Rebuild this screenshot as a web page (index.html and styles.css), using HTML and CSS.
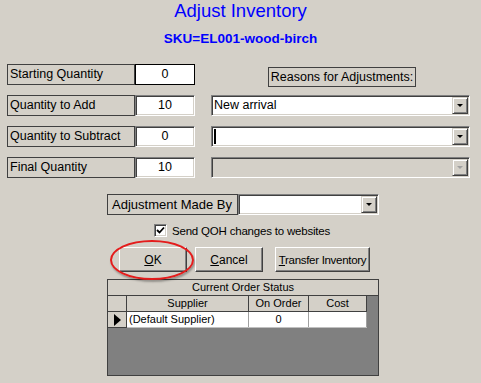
FILE: index.html
```html
<!DOCTYPE html>
<html lang="en">
<head>
    <meta charset="UTF-8">
    <title>Adjust Inventory</title>
    <link rel="stylesheet" href="styles.css">
</head>
<body>
    <div class="window">
        <h1 class="title">Adjust Inventory</h1>
        <h2 class="sku">SKU=EL001-wood-birch</h2>

        <div class="fields">
            <div class="qty-col">
                <div class="qty-row">
                    <div class="label-box">Starting Quantity</div>
                    <div class="value-box flat">0</div>
                </div>
                <div class="qty-row">
                    <div class="label-box">Quantity to Add</div>
                    <div class="value-box">10</div>
                </div>
                <div class="qty-row">
                    <div class="label-box">Quantity to Subtract</div>
                    <div class="value-box">0</div>
                </div>
                <div class="qty-row">
                    <div class="label-box">Final Quantity</div>
                    <div class="value-box">10</div>
                </div>
            </div>
            <div class="reason-col">
                <div class="reason-title">Reasons for Adjustments:</div>
                <div class="combo">
                    <span class="combo-text">New arrival</span>
                    <span class="combo-btn"><span class="arrow"></span></span>
                </div>
                <div class="combo">
                    <span class="combo-text"><span class="caret"></span></span>
                    <span class="combo-btn"><span class="arrow"></span></span>
                </div>
                <div class="combo disabled">
                    <span class="combo-text"></span>
                    <span class="combo-btn"><span class="arrow"></span></span>
                </div>
            </div>
        </div>

        <div class="made-by">
            <div class="label-box made-label">Adjustment Made By</div>
            <div class="combo made-combo">
                <span class="combo-text"></span>
                <span class="combo-btn"><span class="arrow"></span></span>
            </div>
        </div>

        <div class="check-row">
            <span class="checkbox">
                <svg width="9" height="9" viewBox="0 0 9 9"><polyline points="1,4 3.5,6.5 8,1.5" fill="none" stroke="#000" stroke-width="1.8"/></svg>
            </span>
            <span>Send QOH changes to websites</span>
        </div>

        <div class="buttons">
            <button class="btn btn-ok"><u>O</u>K</button>
            <button class="btn btn-cancel"><u>C</u>ancel</button>
            <button class="btn btn-transfer"><u>T</u>ransfer Inventory</button>
            <span class="highlight"></span>
        </div>

        <div class="grid">
            <div class="grid-caption">Current Order Status</div>
            <table class="grid-table">
                <tr class="grid-head">
                    <th class="sel"></th>
                    <th class="col-supplier">Supplier</th>
                    <th class="col-order">On Order</th>
                    <th class="col-cost">Cost</th>
                </tr>
                <tr class="grid-row">
                    <td class="sel"><span class="row-arrow"></span></td>
                    <td class="left">(Default Supplier)</td>
                    <td>0</td>
                    <td></td>
                </tr>
            </table>
        </div>
    </div>
</body>
</html>
```

FILE: styles.css
```css
body {
    margin: 0;
    padding: 0;
    background-color: #d4d0c8;
    font-family: "Liberation Sans", Arial, sans-serif;
    font-size: 12.5px;
    color: #000;
}

.window {
    width: 481px;
    height: 383px;
    overflow: hidden;
}

.title {
    margin: 0;
    font-size: 18.5px;
    font-weight: normal;
    line-height: 22px;
    color: #0000ff;
    text-align: center;
}

.sku {
    margin: 9px 0 0;
    font-size: 13.5px;
    line-height: 16px;
    color: #0000ff;
    text-align: center;
}

/* quantities + reasons */
.fields {
    display: flex;
    margin-top: 17px;
}

.qty-col {
    display: flex;
    flex-direction: column;
    gap: 10px;
    margin-left: 7px;
}

.qty-row {
    display: flex;
    height: 21px;
}

.label-box {
    box-sizing: border-box;
    width: 128px;
    height: 21px;
    border: 1px solid #404040;
    padding-left: 2px;
    line-height: 19px;
    white-space: nowrap;
}

.value-box {
    box-sizing: border-box;
    width: 60px;
    height: 21px;
    background-color: #fff;
    text-align: center;
    line-height: 19px;
    border: 1px solid;
    border-color: #808080 #fff #fff #808080;
    box-shadow: inset 1px 1px #404040, inset -1px -1px #d4d0c8;
}

.value-box.flat {
    border: 1px solid #000;
    box-shadow: none;
}

.reason-col {
    display: flex;
    flex-direction: column;
    gap: 10px;
    margin-left: 16px;
    padding-top: 3px;
    width: 259px;
}

.reason-title {
    align-self: center;
    box-sizing: border-box;
    margin-left: 3px;
    margin-bottom: -2px;
    height: 20px;
    padding: 0 2px;
    border: 1px solid #404040;
    line-height: 18px;
}

.combo {
    display: flex;
    box-sizing: border-box;
    height: 21px;
    background-color: #fff;
    border: 1px solid;
    border-color: #808080 #fff #fff #808080;
    box-shadow: inset 1px 1px #404040, inset -1px -1px #d4d0c8;
    padding: 1px;
}

.combo.disabled {
    background-color: #d4d0c8;
}

.combo-text {
    flex: 1;
    padding-left: 1px;
    line-height: 17px;
    white-space: nowrap;
}

.caret {
    display: inline-block;
    width: 2px;
    height: 15px;
    margin-top: 1px;
    background-color: #000;
    vertical-align: top;
}

.combo-btn {
    box-sizing: border-box;
    width: 16px;
    height: 17px;
    display: flex;
    align-items: center;
    justify-content: center;
    background-color: #d4d0c8;
    border: 1px solid;
    border-color: #d4d0c8 #404040 #404040 #d4d0c8;
    box-shadow: inset 1px 1px #fff, inset -1px -1px #808080;
}

.arrow {
    width: 0;
    height: 0;
    border-left: 3px solid transparent;
    border-right: 3px solid transparent;
    border-top: 3px solid #000;
}

.disabled .arrow {
    border-top-color: #a0a0a0;
}

/* adjustment made by */
.made-by {
    display: flex;
    margin: 16px 0 0 107px;
}

.made-label {
    width: 131px;
    padding-left: 4px;
    font-size: 13px;
}

.made-combo {
    width: 141px;
}

.check-row {
    display: flex;
    align-items: center;
    gap: 5px;
    margin: 9px 0 0 154px;
    height: 13px;
    font-size: 11.5px;
    letter-spacing: -0.2px;
    white-space: nowrap;
}

.checkbox {
    box-sizing: border-box;
    width: 13px;
    height: 13px;
    display: flex;
    align-items: center;
    justify-content: center;
    background-color: #fff;
    border: 1px solid;
    border-color: #808080 #fff #fff #808080;
    box-shadow: inset 1px 1px #404040, inset -1px -1px #d4d0c8;
}

/* buttons */
.buttons {
    position: relative;
    display: flex;
    margin: 10px 0 0 119px;
    height: 25px;
}

.btn {
    box-sizing: border-box;
    height: 25px;
    padding: 0;
    font-family: "Liberation Sans", Arial, sans-serif;
    font-size: 12px;
    color: #000;
    white-space: nowrap;
    background-color: #d4d0c8;
    border: 1px solid;
    border-color: #fff #404040 #404040 #fff;
    box-shadow: inset -1px -1px #808080;
}

.btn-ok {
    width: 68px;
}

.btn-cancel {
    width: 68px;
    margin-left: 8px;
}

.btn-transfer {
    width: 95px;
    margin-left: 12px;
    font-size: 11.5px;
    letter-spacing: -0.3px;
}

.highlight {
    position: absolute;
    left: -9px;
    top: -7px;
    width: 80px;
    height: 36px;
    border: 2px solid #e41c1c;
    border-radius: 50%;
    box-shadow: 1px 2px 2px rgba(0, 0, 0, 0.3);
}

/* order status grid */
.grid {
    box-sizing: border-box;
    width: 272px;
    height: 97px;
    margin: 7px 0 0 107px;
    border: 1px solid #404040;
    background-color: #808080;
    font-size: 11px;
}

.grid-caption {
    height: 15px;
    line-height: 15px;
    text-align: center;
    background-color: #d4d0c8;
    border-bottom: 1px solid #404040;
}

.grid-table {
    border-collapse: collapse;
    font-size: 11px;
}

.grid-table th,
.grid-table td {
    height: 15px;
    padding: 0;
    line-height: 15px;
    text-align: center;
    white-space: nowrap;
}

.grid-head th {
    font-weight: normal;
    background-color: #d4d0c8;
    border-right: 1px solid #404040;
    border-bottom: 1px solid #404040;
}

.grid-row td {
    background-color: #fff;
    border-right: 1px solid #a0a0a0;
    border-bottom: 1px solid #c0c0c0;
}

.grid-row td.sel {
    background-color: #d4d0c8;
    border-right: 1px solid #404040;
    border-bottom: 1px solid #404040;
}

.grid-row td.left {
    text-align: left;
    padding-left: 2px;
}

.sel {
    width: 18px;
}

.col-supplier {
    width: 121px;
}

.col-order {
    width: 59px;
}

.col-cost {
    width: 57px;
}

.row-arrow {
    display: inline-block;
    width: 0;
    height: 0;
    border-top: 6px solid transparent;
    border-bottom: 6px solid transparent;
    border-left: 7px solid #000;
    vertical-align: middle;
}
```
